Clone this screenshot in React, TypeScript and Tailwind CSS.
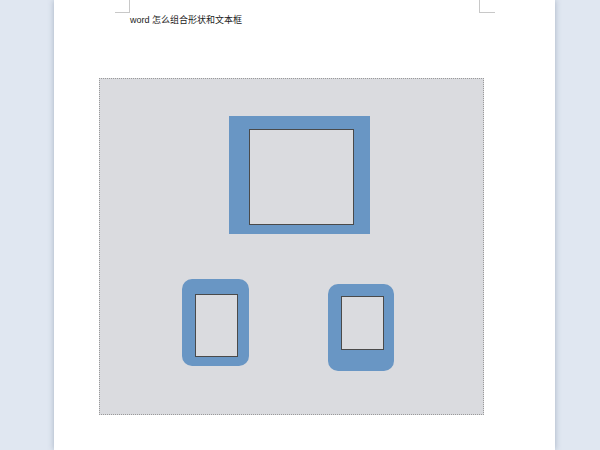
export default function App() {
  return (
    <div className="w-full h-[450px] bg-[#e0e7f1] overflow-hidden flex">
      <div className="ml-[54px] w-[501px] h-full bg-white shadow-[0_0_6px_rgba(60,80,110,0.35)] flex flex-col">
        {/* corner marks */}
        <div className="flex h-[13px]">
          <div className="ml-[61px] w-[15px] h-[13px] border-r border-b border-[#c8c8c8]" />
          <div className="ml-[349px] w-[16px] h-[13px] border-l border-b border-[#c8c8c8]" />
        </div>
        <p
          className="ml-[76px] mt-[1px] text-[9px] leading-[12px] text-[#222]"
          style={{ fontFamily: '"Liberation Sans", "Noto Sans CJK SC", sans-serif' }}
        >
          word 怎么组合形状和文本框
        </p>
        {/* drawing canvas */}
        <div className="ml-[45px] mt-[52px] w-[385px] h-[337px] bg-[#dadbdf] border border-dotted border-[#9a9a9a]">
          <svg width="383" height="335" viewBox="0 0 383 335">
            <rect x="129" y="37" width="141" height="118" fill="#6996c4" />
            <rect x="149.5" y="50.5" width="104" height="95" fill="#dadbdf" stroke="#4a4a4a" strokeWidth="1" />

            <rect x="82" y="200" width="67" height="87" rx="10" fill="#6996c4" />
            <rect x="95.5" y="215.5" width="42" height="62" fill="#dadbdf" stroke="#4a4a4a" strokeWidth="1" />

            <rect x="228" y="205" width="66" height="87" rx="10" fill="#6996c4" />
            <rect x="241.5" y="217.5" width="42" height="53" fill="#dadbdf" stroke="#4a4a4a" strokeWidth="1" />
          </svg>
        </div>
      </div>
    </div>
  );
}
